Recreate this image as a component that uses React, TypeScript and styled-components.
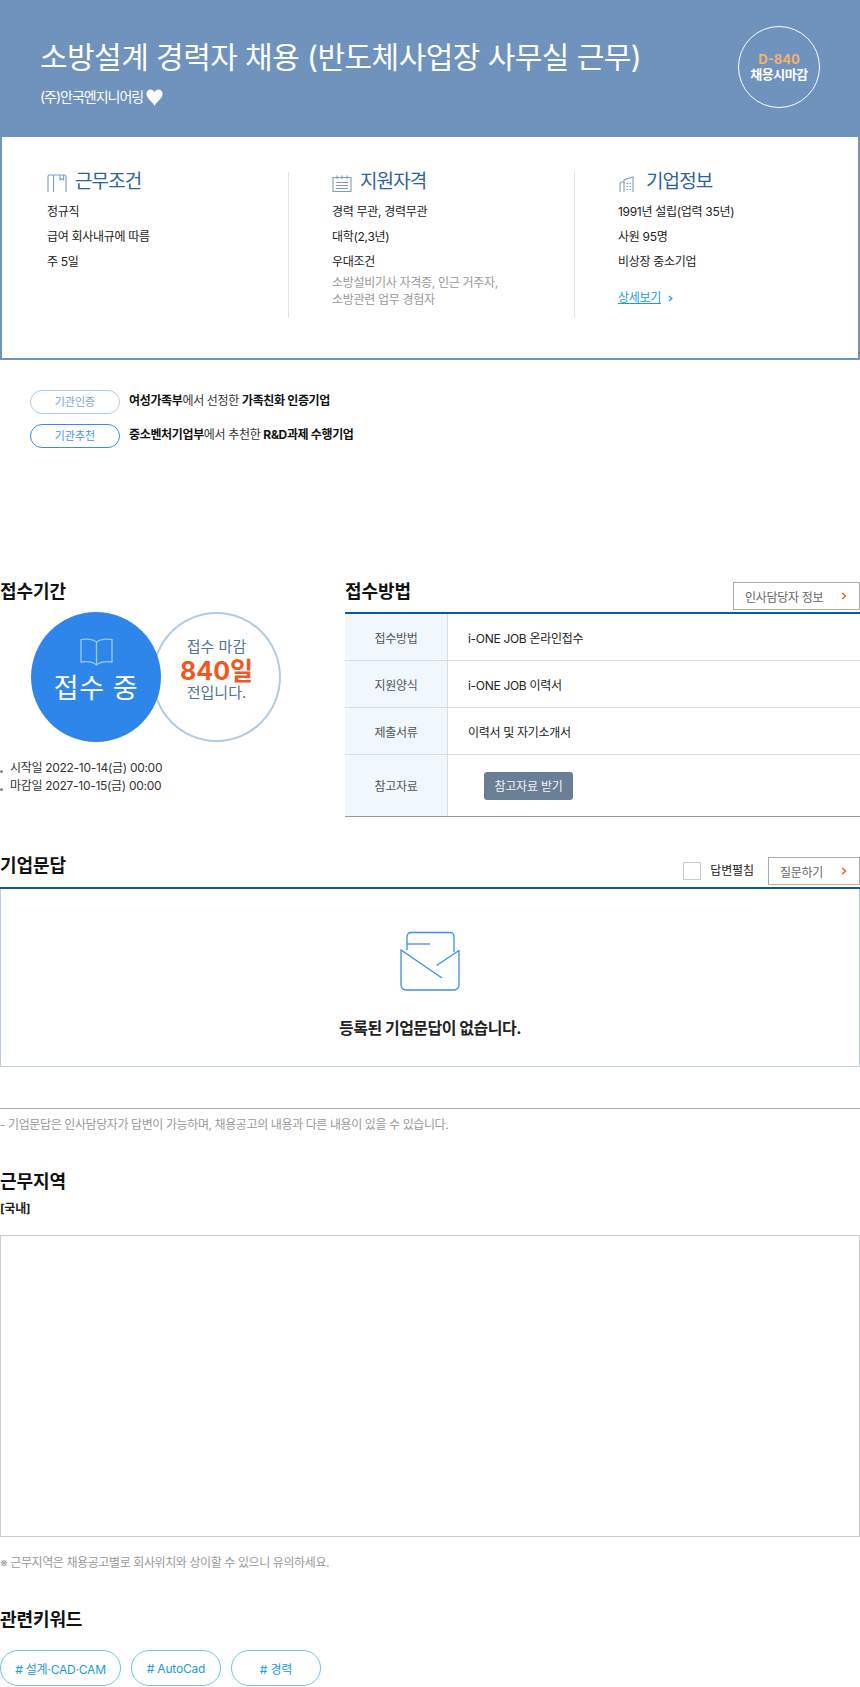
import React from "react";
import styled, { createGlobalStyle } from "styled-components";

const Global = createGlobalStyle`
  html, body { margin: 0; padding: 0; background: #fff; }
  body {
    width: 860px;
    overflow-x: hidden;
    font-family: Inter, "Noto Sans CJK KR", "Noto Sans", sans-serif;
    color: #222;
  }
  * { box-sizing: border-box; }
`;

const Page = styled.div`
  width: 860px;
  height: 1687px;
  overflow: hidden;
`;

const Header = styled.header`
  height: 137px;
  background: #7093bd;
  color: #fff;
  padding: 26px 40px 0 40px;
  display: flex;
  justify-content: space-between;
  align-items: flex-start;
`;

const HeadText = styled.div`
  padding-top: 11px;
`;

const Title = styled.h1`
  margin: 0;
  font-size: 30px;
  line-height: 40px;
  font-weight: 400;
  letter-spacing: -0.55px;
`;

const Company = styled.div`
  margin-top: 10px;
  display: flex;
  align-items: center;
  gap: 3px;
  font-size: 14px;
  line-height: 20px;
  letter-spacing: -1px;
`;

const DeadlineCircle = styled.div`
  width: 82px;
  height: 82px;
  border: 1px solid #fff;
  border-radius: 50%;
  display: flex;
  flex-direction: column;
  align-items: center;
  justify-content: center;
`;

const DDay = styled.span`
  color: #f5b06c;
  font-size: 13px;
  line-height: 15px;
  font-weight: 700;
`;

const DeadlineText = styled.span`
  font-size: 13px;
  line-height: 15px;
  font-weight: 700;
  letter-spacing: -0.5px;
`;

const Summary = styled.section`
  height: 223px;
  border: 2px solid #7093bd;
  border-top: 0;
  padding-top: 35px;
  display: grid;
  grid-template-columns: 286px 286px 284px;
  align-items: start;
`;

const Column = styled.div<{ $first?: boolean }>`
  min-height: 146px;
  padding-left: ${(p) => (p.$first ? "45px" : "43px")};
  border-left: ${(p) => (p.$first ? "0" : "1px solid #dde3ea")};
`;

const ColumnTitle = styled.h3`
  margin: 0 0 7px;
  display: flex;
  align-items: flex-end;
  gap: 8px;
  height: 20px;
  color: #2f62a5;
  font-size: 19px;
  line-height: 20px;
  font-weight: 400;
  letter-spacing: -0.9px;
`;

const InfoRow = styled.div`
  font-size: 12px;
  line-height: 25px;
  letter-spacing: -0.3px;
  color: #222;
`;

const InfoMuted = styled.div`
  font-size: 12px;
  line-height: 17px;
  letter-spacing: -0.3px;
  color: #999;
`;

const DetailLink = styled.a`
  margin-top: 14px;
  display: inline-flex;
  align-items: center;
  gap: 6px;
  font-size: 12px;
  line-height: 20px;
  letter-spacing: -0.3px;
  color: #1b9be0;
  span { text-decoration: underline; }
`;

const Certs = styled.section`
  margin-top: 30px;
  padding-left: 30px;
  display: flex;
  flex-direction: column;
  gap: 10px;
`;

const CertRow = styled.div`
  display: flex;
  align-items: center;
  gap: 9px;
  height: 24px;
`;

const CertBadge = styled.span<{ $strong?: boolean }>`
  width: 90px;
  height: 24px;
  border-radius: 12px;
  border: 1px solid ${(p) => (p.$strong ? "#3a8ae6" : "#b3cbe6")};
  color: ${(p) => (p.$strong ? "#4a94e6" : "#7fa3cf")};
  font-size: 11px;
  line-height: 22px;
  text-align: center;
`;

const CertText = styled.p`
  margin: 0 0 2px;
  font-size: 12px;
  line-height: 18px;
  letter-spacing: -0.35px;
  color: #333;
  b { font-weight: 700; color: #111; }
`;

const Apply = styled.section`
  margin-top: 132px;
  display: grid;
  grid-template-columns: 345px 515px;
`;

const Heading = styled.h2`
  margin: 0;
  font-size: 18px;
  line-height: 24px;
  font-weight: 700;
  letter-spacing: -0.1px;
  color: #111;
`;

const Circles = styled.div`
  margin-top: 8px;
  padding-left: 31px;
  display: flex;
  align-items: flex-start;
`;

const BlueCircle = styled.div`
  position: relative;
  z-index: 1;
  width: 130px;
  height: 130px;
  border-radius: 50%;
  background: #2e86ea;
  color: #fff;
  display: flex;
  flex-direction: column;
  align-items: center;
  padding-top: 26px;
`;

const BlueLabel = styled.span`
  margin-top: 4px;
  font-size: 27px;
  line-height: 38px;
  letter-spacing: 0.6px;
`;

const RingCircle = styled.div`
  margin-left: -9px;
  width: 129px;
  height: 130px;
  border-radius: 50%;
  border: 2px solid #b2cae2;
  display: flex;
  flex-direction: column;
  align-items: center;
  padding-top: 21px;
  color: #4f7399;
  font-size: 15px;
  line-height: 24px;
`;

const RingDays = styled.strong`
  margin-top: 1px;
  margin-bottom: -1px;
  color: #f4561f;
  font-size: 25px;
  line-height: 22px;
  font-weight: 700;
`;

const Dates = styled.ul`
  margin: 17px 0 0;
  padding: 0;
  list-style: none;
  font-size: 12px;
  line-height: 18px;
  letter-spacing: -0.3px;
  color: #333;
`;

const DateItem = styled.li`
  &::before {
    content: "";
    display: inline-block;
    width: 3px;
    height: 3px;
    margin-right: 7px;
    border-radius: 50%;
    background: #888;
    vertical-align: -1px;
  }
`;

const SectionHead = styled.div<{ $height: number }>`
  height: ${(p) => p.$height}px;
  display: flex;
  justify-content: space-between;
  align-items: flex-end;
`;

const SectionHeading = styled(Heading)`
  align-self: flex-start;
`;

const Controls = styled.div`
  display: flex;
  align-items: center;
  margin-bottom: 2px;
`;

const OutlineButton = styled.button<{ $width: number }>`
  width: ${(p) => p.$width}px;
  height: 28px;
  padding: 0 11px;
  background: #fff;
  border: 1px solid #aaa;
  display: flex;
  align-items: center;
  justify-content: space-between;
  font-family: inherit;
  font-size: 12px;
  letter-spacing: -0.3px;
  color: #666;
`;

const Check = styled.span`
  width: 18px;
  height: 18px;
  border: 1px solid #ccc;
  background: #fff;
`;

const CheckLabel = styled.label`
  margin: 0 14px 0 9px;
  font-size: 12px;
  line-height: 18px;
  letter-spacing: -0.1px;
  color: #222;
`;

const InfoTable = styled.div`
  border-top: 2px solid #0b57a8;
  border-bottom: 1px solid #999;
`;

const TableRow = styled.div<{ $height: number }>`
  height: ${(p) => p.$height}px;
  display: grid;
  grid-template-columns: 103px 1fr;
  & + & { border-top: 1px solid #ddd; }
`;

const TableHead = styled.div`
  background: #f0f8fd;
  border-right: 1px solid #ddd;
  display: flex;
  align-items: center;
  justify-content: center;
  font-size: 12px;
  letter-spacing: -0.3px;
  color: #555;
`;

const TableCell = styled.div`
  padding-left: 20px;
  display: flex;
  align-items: center;
  font-size: 12px;
  letter-spacing: -0.3px;
  color: #222;
`;

const FileButton = styled.button`
  margin-left: 16px;
  width: 89px;
  height: 28px;
  padding: 0;
  border: 0;
  border-radius: 3px;
  background: #6a7f95;
  color: #f2f4f6;
  font-family: inherit;
  font-size: 12px;
  letter-spacing: -0.2px;
`;

const QnaHead = styled(SectionHead)`
  margin-top: 37px;
  border-bottom: 2px solid #0b57a8;
`;

const QnaBox = styled.div`
  height: 178px;
  border: 1px solid #b8cce4;
  border-top: 0;
  padding-top: 42px;
  display: flex;
  flex-direction: column;
  align-items: center;
`;

const EmptyText = styled.p`
  margin: 25px 0 0;
  font-size: 16px;
  line-height: 24px;
  font-weight: 700;
  letter-spacing: -0.5px;
  color: #222;
`;

const NoticeBar = styled.p`
  margin: 41px 0 0;
  padding-top: 7px;
  border-top: 1px solid #aaa;
  font-size: 12px;
  line-height: 18px;
  letter-spacing: -0.4px;
  color: #999;
`;

const RegionHeading = styled(Heading)`
  margin-top: 36px;
`;

const RegionName = styled.div`
  margin-top: 6px;
  font-size: 12px;
  line-height: 18px;
  font-weight: 700;
  letter-spacing: -0.2px;
  color: #222;
`;

const MapBox = styled.div`
  margin-top: 17px;
  height: 302px;
  border: 1px solid #ccc;
`;

const MapNote = styled.p`
  margin: 17px 0 0;
  font-size: 12px;
  line-height: 18px;
  letter-spacing: -0.4px;
  color: #999;
`;

const Tags = styled.div`
  margin-top: 18px;
  display: flex;
  gap: 10px;
`;

const Tag = styled.span<{ $width: number }>`
  width: ${(p) => p.$width}px;
  height: 36px;
  border: 1px solid #6cc4ee;
  border-radius: 18px;
  display: flex;
  align-items: center;
  justify-content: center;
  font-size: 12px;
  letter-spacing: -0.2px;
  color: #1b9be0;
`;

const Chevron = ({ color = "#f4561f", size = 8 }: { color?: string; size?: number }) => (
  <svg width={size} height={size} viewBox="0 0 8 8" fill="none" aria-hidden="true">
    <path d="M2.2 1 L5.6 4 L2.2 7" stroke={color} strokeWidth="1.4" />
  </svg>
);

const Heart = () => (
  <svg width="17" height="17" viewBox="0 0 17 17" aria-hidden="true">
    <path
      d="M8.5 16.8C7 13.4 0.4 9.6 0.4 4.8 0.4 2.2 2.2 0.4 4.4 0.4 6.1 0.4 7.7 1.4 8.5 3 9.3 1.4 10.9 0.4 12.6 0.4 14.8 0.4 16.6 2.2 16.6 4.8 16.6 9.6 10 13.4 8.5 16.8Z"
      fill="#fbfcfd"
    />
  </svg>
);

const WorkIcon = () => (
  <svg width="20" height="18" viewBox="0 0 20 18" fill="none" stroke="#7e9cc4" strokeWidth="1.1" aria-hidden="true">
    <path d="M1 18V2.5A1.5 1.5 0 0 1 2.5 1H17.5A1.5 1.5 0 0 1 19 2.5V18" />
    <path d="M6.5 1V18" />
    <path d="M13 1V6L14.8 4.6 16.6 6V1" />
  </svg>
);

const CalendarIcon = () => (
  <svg width="20" height="17" viewBox="0 0 20 17" fill="none" stroke="#7e9cc4" strokeWidth="1.1" aria-hidden="true">
    <path d="M1 17V2.5H19V17" />
    <path d="M5 0.5V4M10 0.5V4M15 0.5V4" />
    <path d="M4 7.5H16M4 10.5H16M4 13.5H16M1 16.5H19" />
  </svg>
);

const BuildingIcon = () => (
  <svg width="20" height="16" viewBox="0 0 20 16" fill="none" stroke="#7e9cc4" strokeWidth="1.1" aria-hidden="true">
    <path d="M2 16V7.5A1.5 1.5 0 0 1 3.5 6H6V4L15 1V16" />
    <path d="M6 6V16" />
    <path d="M8.5 7.5H10M11.5 7.5H13M8.5 10.5H10M11.5 10.5H13M8.5 13.5H10M11.5 13.5H13" />
  </svg>
);

const BookIcon = () => (
  <svg width="33" height="28" viewBox="0 0 33 28" fill="none" stroke="#9cc5f5" strokeWidth="1.3" aria-hidden="true">
    <path d="M16.5 4C13 1.5 6 0.8 1 1.6V24C6 23.4 13 24 16.5 27 20 24 27 23.4 32 24V1.6C27 0.8 20 1.5 16.5 4Z" />
    <path d="M16.5 4V27" />
  </svg>
);

const EnvelopeIcon = () => (
  <svg width="60" height="60" viewBox="0 0 60 60" fill="none" stroke="#3d8ee8" strokeWidth="1.3" aria-hidden="true">
    <path d="M7 19V5.5A4 4 0 0 1 11 1.5H50A4 4 0 0 1 54 5.5V21" />
    <path d="M7 13H30" />
    <path d="M36.5 34.5L59 19.5" />
    <path d="M42 47L1 19V54A5 5 0 0 0 6 59H54A5 5 0 0 0 59 54V19" />
  </svg>
);

export default function App() {
  return (
    <Page>
      <Global />
      <Header>
        <HeadText>
          <Title>소방설계 경력자 채용 (반도체사업장 사무실 근무)</Title>
          <Company>
            (주)안국엔지니어링
            <Heart />
          </Company>
        </HeadText>
        <DeadlineCircle>
          <DDay>D-840</DDay>
          <DeadlineText>채용시마감</DeadlineText>
        </DeadlineCircle>
      </Header>

      <Summary>
        <Column $first>
          <ColumnTitle>
            <WorkIcon />
            근무조건
          </ColumnTitle>
          <InfoRow>정규직</InfoRow>
          <InfoRow>급여 회사내규에 따름</InfoRow>
          <InfoRow>주 5일</InfoRow>
        </Column>
        <Column>
          <ColumnTitle>
            <CalendarIcon />
            지원자격
          </ColumnTitle>
          <InfoRow>경력 무관, 경력무관</InfoRow>
          <InfoRow>대학(2,3년)</InfoRow>
          <InfoRow>우대조건</InfoRow>
          <InfoMuted>소방설비기사 자격증, 인근 거주자,</InfoMuted>
          <InfoMuted>소방관련 업무 경험자</InfoMuted>
        </Column>
        <Column>
          <ColumnTitle>
            <BuildingIcon />
            기업정보
          </ColumnTitle>
          <InfoRow>1991년 설립(업력 35년)</InfoRow>
          <InfoRow>사원 95명</InfoRow>
          <InfoRow>비상장 중소기업</InfoRow>
          <DetailLink>
            <span>상세보기</span>
            <Chevron color="#1b9be0" size={7} />
          </DetailLink>
        </Column>
      </Summary>

      <Certs>
        <CertRow>
          <CertBadge>기관인증</CertBadge>
          <CertText>
            <b>여성가족부</b>에서 선정한 <b>가족친화 인증기업</b>
          </CertText>
        </CertRow>
        <CertRow>
          <CertBadge $strong>기관추천</CertBadge>
          <CertText>
            <b>중소벤처기업부</b>에서 추천한 <b>R&amp;D과제 수행기업</b>
          </CertText>
        </CertRow>
      </Certs>

      <Apply>
        <div>
          <Heading>접수기간</Heading>
          <Circles>
            <BlueCircle>
              <BookIcon />
              <BlueLabel>접수 중</BlueLabel>
            </BlueCircle>
            <RingCircle>
              <span>접수 마감</span>
              <RingDays>840일</RingDays>
              <span>전입니다.</span>
            </RingCircle>
          </Circles>
          <Dates>
            <DateItem>시작일 2022-10-14(금) 00:00</DateItem>
            <DateItem>마감일 2027-10-15(금) 00:00</DateItem>
          </Dates>
        </div>
        <div>
          <SectionHead $height={32}>
            <SectionHeading>접수방법</SectionHeading>
            <Controls>
              <OutlineButton $width={127}>
                인사담당자 정보
                <Chevron />
              </OutlineButton>
            </Controls>
          </SectionHead>
          <InfoTable>
            <TableRow $height={46}>
              <TableHead>접수방법</TableHead>
              <TableCell>i-ONE JOB 온라인접수</TableCell>
            </TableRow>
            <TableRow $height={47}>
              <TableHead>지원양식</TableHead>
              <TableCell>i-ONE JOB 이력서</TableCell>
            </TableRow>
            <TableRow $height={47}>
              <TableHead>제출서류</TableHead>
              <TableCell>이력서 및 자기소개서</TableCell>
            </TableRow>
            <TableRow $height={62}>
              <TableHead>참고자료</TableHead>
              <TableCell>
                <FileButton>참고자료 받기</FileButton>
              </TableCell>
            </TableRow>
          </InfoTable>
        </div>
      </Apply>

      <QnaHead $height={35}>
        <SectionHeading>기업문답</SectionHeading>
        <Controls>
          <Check />
          <CheckLabel>답변펼침</CheckLabel>
          <OutlineButton $width={92}>
            질문하기
            <Chevron />
          </OutlineButton>
        </Controls>
      </QnaHead>
      <QnaBox>
        <EnvelopeIcon />
        <EmptyText>등록된 기업문답이 없습니다.</EmptyText>
      </QnaBox>
      <NoticeBar>- 기업문답은 인사담당자가 답변이 가능하며, 채용공고의 내용과 다른 내용이 있을 수 있습니다.</NoticeBar>

      <RegionHeading>근무지역</RegionHeading>
      <RegionName>[국내]</RegionName>
      <MapBox />
      <MapNote>※ 근무지역은 채용공고별로 회사위치와 상이할 수 있으니 유의하세요.</MapNote>

      <RegionHeading>관련키워드</RegionHeading>
      <Tags>
        <Tag $width={121}># 설계·CAD·CAM</Tag>
        <Tag $width={90}># AutoCad</Tag>
        <Tag $width={90}># 경력</Tag>
      </Tags>
    </Page>
  );
}
